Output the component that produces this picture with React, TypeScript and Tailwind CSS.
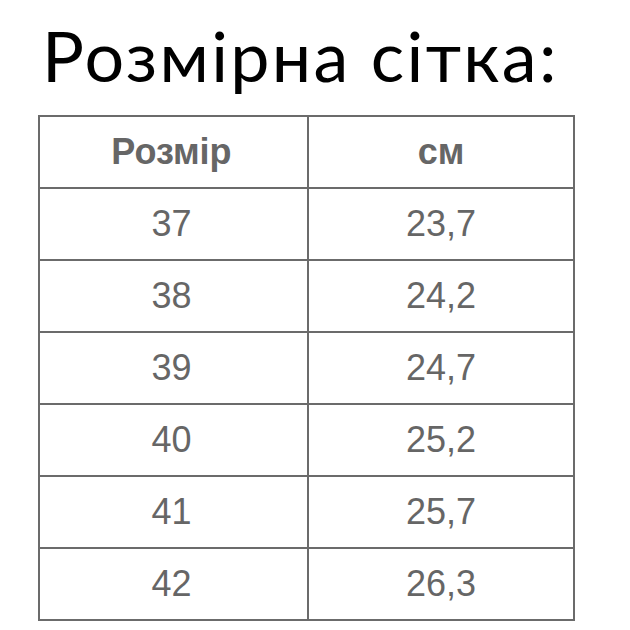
export default function App() {
  const rows = [
    ["37", "23,7"],
    ["38", "24,2"],
    ["39", "24,7"],
    ["40", "25,2"],
    ["41", "25,7"],
    ["42", "26,3"],
  ]

  return (
    <div className="w-[630px] h-[630px] bg-white overflow-hidden">
      <h1 className="pl-[42px] pt-[15px] h-[115px] text-[70px] leading-[80px] text-black font-['Lato',sans-serif] tracking-[2.3px]">
        Розмірна сітка:
      </h1>
      <table className="ml-[38px] w-[537px] border-collapse font-['Liberation_Sans',Arial,sans-serif] text-[#666]">
        <thead>
          <tr className="h-[72px]">
            <th className="w-[269px] pr-[4px] border-2 border-[#6b6b6b] text-[36px] font-bold">Розмір</th>
            <th className="border-2 border-[#6b6b6b] text-[36px] font-bold">см</th>
          </tr>
        </thead>
        <tbody>
          {rows.map(([size, cm]) => (
            <tr key={size} className="h-[72px]">
              <td className="pr-[4px] border-2 border-[#6b6b6b] text-center text-[36px]">{size}</td>
              <td className="border-2 border-[#6b6b6b] text-center text-[36px]">{cm}</td>
            </tr>
          ))}
        </tbody>
      </table>
    </div>
  )
}
